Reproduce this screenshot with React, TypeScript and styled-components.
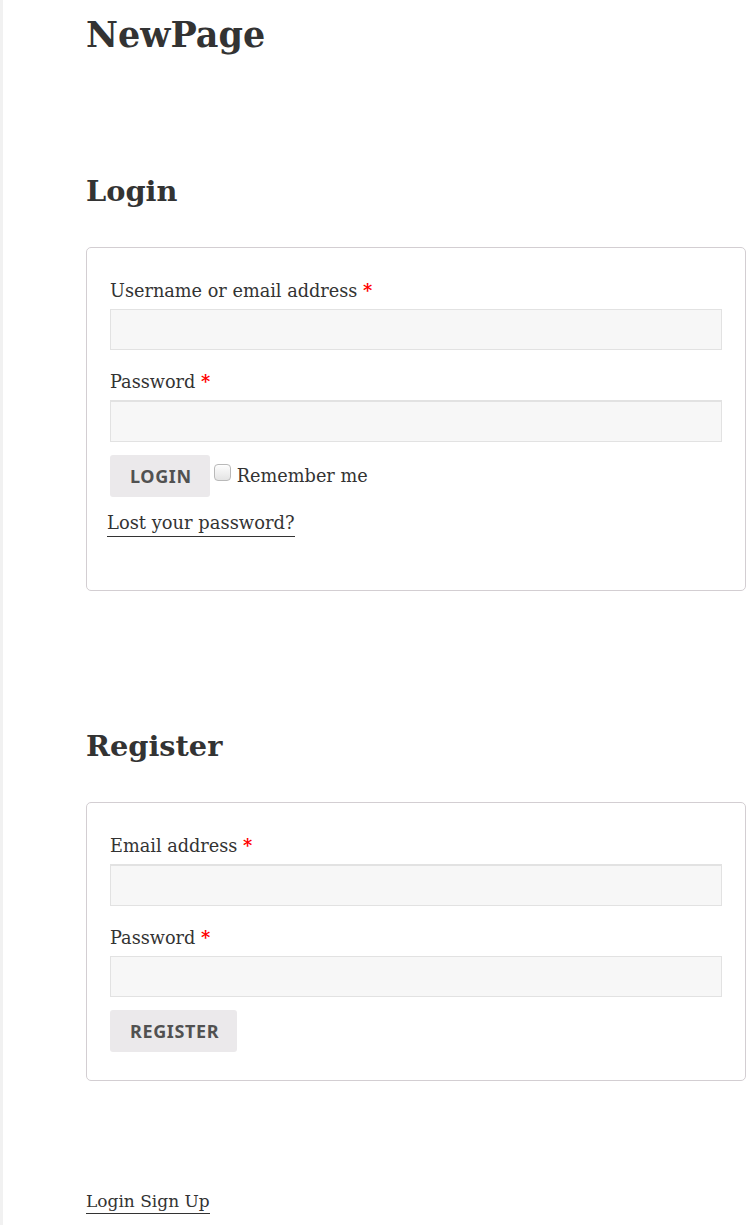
import React from "react";
import styled, { createGlobalStyle } from "styled-components";

const Global = createGlobalStyle`
  html, body { margin: 0; padding: 0; background: #fff; }
  body { font-family: "DejaVu Serif", "Liberation Serif", serif; color: #333; }
  * { box-sizing: border-box; }
`;

const Page = styled.div`
  display: flex;
  min-height: 1225px;
  overflow: hidden;
`;

const Rail = styled.div`
  width: 3px;
  flex: none;
  background: #f1f1f1;
`;

const Main = styled.main`
  flex: none;
  width: 660px;
  margin-left: 83px;
  padding-top: 13px;
  display: flex;
  flex-direction: column;
  align-items: stretch;
`;

const Title = styled.h1`
  margin: 0;
  font-size: 35px;
  line-height: 44px;
  font-weight: 700;
  color: #333;
`;

const Heading = styled.h2<{ $top: number }>`
  margin: ${(p) => p.$top}px 0 0;
  font-size: 28.8px;
  line-height: 40px;
  font-weight: 700;
  color: #333;
`;

const Card = styled.form`
  margin-top: 36px;
  border: 1px solid #d3ced2;
  border-radius: 5px;
  padding: 27px 20px 20px;
  display: flex;
  flex-direction: column;
`;

const Row = styled.div<{ $mb: number }>`
  padding: 3px;
  margin-bottom: ${(p) => p.$mb}px;
  display: flex;
  flex-direction: column;
`;

const Label = styled.label`
  font-size: 17.7px;
  line-height: 26px;
  margin-bottom: 5px;
`;

const Req = styled.span`
  color: red;
  font-weight: 700;
`;

const Input = styled.input<{ $thickTop?: boolean }>`
  display: block;
  width: 100%;
  height: ${(p) => (p.$thickTop ? 42 : 41)}px;
  border: 1px solid #e2e2e2;
  border-top-width: ${(p) => (p.$thickTop ? 2 : 1)}px;
  background: #f7f7f7;
  border-radius: 0;
  margin: 0;
`;

const Actions = styled.div<{ $mb: number }>`
  display: flex;
  align-items: center;
  padding: 3px;
  margin-bottom: ${(p) => p.$mb}px;
`;

const Button = styled.button`
  font-family: "Noto Sans", "Open Sans", sans-serif;
  font-weight: 700;
  font-size: 18px;
  letter-spacing: 0.035em;
  text-transform: uppercase;
  color: #515151;
  background: #ebe9eb;
  border: 0;
  border-radius: 3px;
  height: 42px;
  padding: 0 18px 0 20px;
`;

const Remember = styled.label`
  display: flex;
  align-items: flex-start;
  font-size: 17.7px;
  line-height: 26px;
  margin-left: 4px;
`;

const Check = styled.input`
  appearance: none;
  -webkit-appearance: none;
  width: 17px;
  height: 17px;
  margin: 1px 6px 0 0;
  border: 1px solid #b9b9b9;
  border-radius: 4px;
  background: linear-gradient(#fdfdfd, #e4e4e4);
  box-shadow: inset 0 1px 1px rgba(255, 255, 255, 0.8);
`;

const Lost = styled.a`
  font-size: 17.9px;
  line-height: 26px;
  color: #333;
  text-decoration: none;
  border-bottom: 1px solid #333;
  align-self: flex-start;
  margin-bottom: 33px;
`;

const Footer = styled.a`
  align-self: flex-start;
  margin-top: 108px;
  font-size: 17px;
  line-height: 24px;
  color: #333;
  text-decoration: none;
  border-bottom: 1px solid #333;
`;

export default function App() {
  return (
    <Page>
      <Global />
      <Rail />
      <Main>
        <Title>NewPage</Title>
        <Heading $top={114}>Login</Heading>
        <Card>
          <Row $mb={13}>
            <Label>Username or email address <Req>*</Req></Label>
            <Input type="text" />
          </Row>
          <Row $mb={7}>
            <Label>Password <Req>*</Req></Label>
            <Input type="password" $thickTop />
          </Row>
          <Actions $mb={10}>
            <Button type="button">Login</Button>
            <Remember>
              <Check type="checkbox" />
              Remember me
            </Remember>
          </Actions>
          <Lost href="#">Lost your password?</Lost>
        </Card>
        <Heading $top={135}>Register</Heading>
        <Card>
          <Row $mb={13}>
            <Label>Email address <Req>*</Req></Label>
            <Input type="email" $thickTop />
          </Row>
          <Row $mb={7}>
            <Label>Password <Req>*</Req></Label>
            <Input type="password" />
          </Row>
          <Actions $mb={5}>
            <Button type="button">Register</Button>
          </Actions>
        </Card>
        <Footer href="#">Login Sign Up</Footer>
      </Main>
    </Page>
  );
}
